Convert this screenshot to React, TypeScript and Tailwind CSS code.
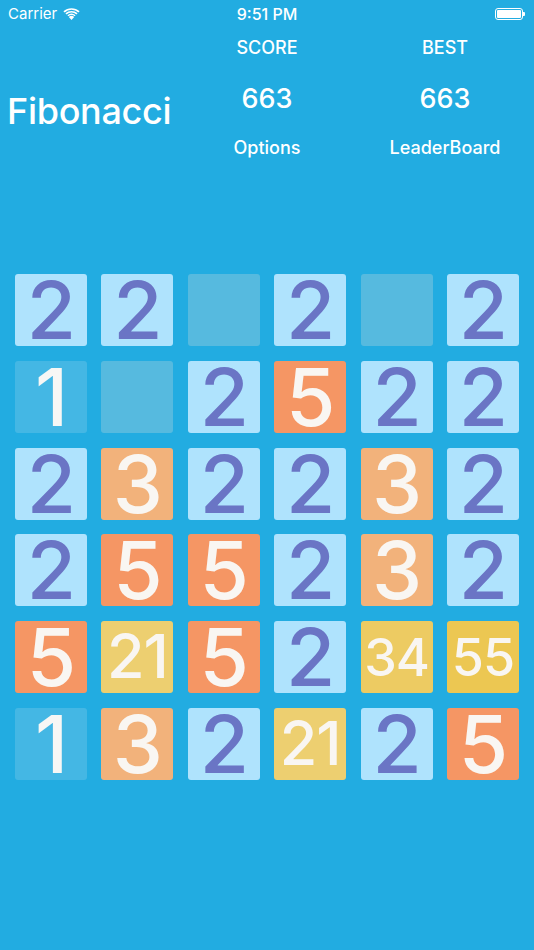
const BOARD: number[][] = [
  [2, 2, 0, 2, 0, 2],
  [1, 0, 2, 5, 2, 2],
  [2, 3, 2, 2, 3, 2],
  [2, 5, 5, 2, 3, 2],
  [5, 21, 5, 2, 34, 55],
  [1, 3, 2, 21, 2, 5],
];

const TILE: Record<number, string> = {
  0: 'bg-[#56badf]',
  1: 'bg-[#44b7e4] text-[#f7f7f5]',
  2: 'bg-[#afe3fd] text-[#6a75c5]',
  3: 'bg-[#f2b27b] text-[#f9f6f2]',
  5: 'bg-[#f59664] text-[#f9f6f2]',
  21: 'bg-[#edcf70] text-[#f9f6f2]',
  34: 'bg-[#edcb62] text-[#f9f6f2]',
  55: 'bg-[#ecc752] text-[#f9f6f2]',
};

function size(v: number) {
  if (v < 10) return 'text-[80px]';
  if (v === 21) return 'text-[61px]';
  return 'text-[52px]';
}

function StatusBar() {
  return (
    <div className="h-[28px] px-[8px] flex items-center justify-between text-white relative">
      <div className="flex items-center gap-[6px] text-[15px]">
        <span>Carrier</span>
        <svg width="17" height="12" viewBox="0 0 17 12" fill="white">
          <path d="M8.5 12 L5.8 8.9 A4 4 0 0 1 11.2 8.9 Z" />
          <path d="M4.4 7.3 A6.3 6.3 0 0 1 12.6 7.3 L11.6 8.3 A5 5 0 0 0 5.4 8.3 Z" />
          <path d="M2.4 5.3 A9.2 9.2 0 0 1 14.6 5.3 L13.4 6.4 A7.6 7.6 0 0 0 3.6 6.4 Z" />
          <path d="M0.4 3.3 A12 12 0 0 1 16.6 3.3 L15.4 4.4 A10.4 10.4 0 0 0 1.6 4.4 Z" />
        </svg>
      </div>
      <span className="absolute left-0 right-0 text-center text-[16px] font-medium">9:51 PM</span>
      <div className="flex items-center mr-[1px]">
        <div className="w-[28px] h-[12px] rounded-[3px] border border-white p-[1px]">
          <div className="w-full h-full bg-white rounded-[1px]" />
        </div>
        <div className="w-[2px] h-[4px] bg-white rounded-r-[1px]" />
      </div>
    </div>
  );
}

function Stat({ label, value, link }: { label: string; value: number; link: string }) {
  return (
    <div className="flex-1 flex flex-col items-center pt-[8px] text-white">
      <div className="text-[18px] leading-[24px] font-medium">{label}</div>
      <div className="text-[27px] leading-[32px] mt-[23px] font-medium">{value}</div>
      <div className="text-[18px] leading-[24px] mt-[21px] font-medium">{link}</div>
    </div>
  );
}

export default function App() {
  return (
    <div
      className="w-[534px] h-[950px] bg-[#22ace1] overflow-hidden"
      style={{ fontFamily: 'Inter, "Noto Sans", sans-serif' }}
    >
      <StatusBar />
      <div className="flex">
        <div className="w-[178px] pt-[61px] pl-[7px] text-white">
          <div className="text-[36px] leading-[44px] font-medium tracking-[-0.3px]">Fibonacci</div>
        </div>
        <Stat label="SCORE" value={663} link="Options" />
        <Stat label="BEST" value={663} link="LeaderBoard" />
      </div>
      <div className="mt-[114px] mx-[15px] grid grid-cols-6 gap-x-[14.4px] gap-y-[14.8px]">
        {BOARD.flat().map((v, i) => (
          <div
            key={i}
            className={`h-[72px] rounded-[3px] flex items-center justify-center font-medium ${TILE[v]} ${size(v)}`}
          >
            {v > 0 && <span className="leading-[0.75] tracking-[-1px]">{v}</span>}
          </div>
        ))}
      </div>
    </div>
  );
}
